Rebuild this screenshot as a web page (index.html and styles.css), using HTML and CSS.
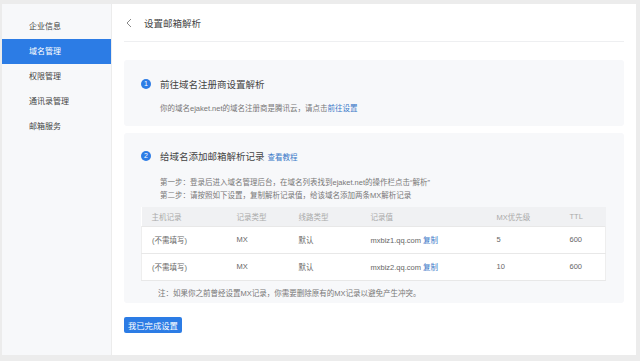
FILE: index.html
```html
<!DOCTYPE html>
<html lang="zh-CN">
<head>
    <meta charset="UTF-8" />
    <meta name="viewport" content="width=device-width, initial-scale=1" />
    <title>设置邮箱解析</title>
    <link rel="stylesheet" href="styles.css">
</head>
<body>
<div class="app">
    <ul class="sidebar">
        <li>企业信息</li>
        <li class="active">域名管理</li>
        <li>权限管理</li>
        <li>通讯录管理</li>
        <li>邮箱服务</li>
    </ul>

    <div class="main">
        <div class="header">
            <svg class="back" width="6" height="10" viewBox="0 0 6 10"><path d="M5 1 L1 5 L5 9" fill="none" stroke="#888" stroke-width="1"/></svg>
            <span class="header-title">设置邮箱解析</span>
        </div>

        <div class="card card-1">
            <div class="card-title"><span class="num">1</span>前往域名注册商设置解析</div>
            <p class="desc">你的域名ejaket.net的域名注册商是腾讯云，请点击<a href="#">前往设置</a></p>
        </div>

        <div class="card card-2">
            <div class="card-title"><span class="num">2</span>给域名添加邮箱解析记录 <a href="#" class="small-link">查看教程</a></div>
            <p class="step">第一步：登录后进入域名管理后台，在域名列表找到ejaket.net的操作栏点击“解析”</p>
            <p class="step">第二步：请按照如下设置，复制解析记录值，给该域名添加两条MX解析记录</p>

            <table class="records">
                <colgroup>
                    <col style="width: 85px">
                    <col style="width: 62px">
                    <col style="width: 72px">
                    <col style="width: 126px">
                    <col style="width: 73px">
                    <col>
                </colgroup>
                <thead>
                    <tr><th>主机记录</th><th>记录类型</th><th>线路类型</th><th>记录值</th><th>MX优先级</th><th>TTL</th></tr>
                </thead>
                <tbody>
                    <tr><td>(不需填写)</td><td>MX</td><td>默认</td><td>mxbiz1.qq.com <a href="#">复制</a></td><td>5</td><td>600</td></tr>
                    <tr><td>(不需填写)</td><td>MX</td><td>默认</td><td>mxbiz2.qq.com <a href="#">复制</a></td><td>10</td><td>600</td></tr>
                </tbody>
            </table>

            <p class="note">注：如果你之前曾经设置MX记录，你需要删除原有的MX记录以避免产生冲突。</p>
        </div>

        <button class="done">我已完成设置</button>
    </div>
</div>
</body>
</html>
```

FILE: styles.css
```css
* {
    box-sizing: border-box;
}

body {
    margin: 0;
    padding: 4px 4px 6px 2px;
    background-color: #ececec;
    font-family: "Liberation Sans", "Noto Sans CJK SC", sans-serif;
    color: #444;
}

a {
    color: #3a78c8;
    text-decoration: none;
}

.app {
    display: flex;
    height: 351px;
}

.sidebar {
    width: 109px;
    margin: 0;
    padding: 10px 0 0;
    list-style: none;
    background-color: #f7f8fa;
}

.sidebar li {
    height: 25px;
    line-height: 25px;
    padding-left: 27px;
    font-size: 8px;
    color: #444;
}

.sidebar li.active {
    background-color: #2c7ce5;
    color: #fff;
}

.main {
    flex: 1;
    background-color: #fff;
    margin-left: 1px;
    padding: 0 12px;
}

.header {
    height: 38px;
    display: flex;
    align-items: center;
    padding-left: 2px;
    border-bottom: 1px solid #eeeff1;
}

.back {
    margin-right: 12px;
}

.header-title {
    font-size: 9.5px;
    color: #444;
}

.card {
    background-color: #f7f8fa;
    border-radius: 3px;
    padding: 0 13px 0 17px;
}

.card-1 {
    margin-top: 18px;
    height: 66px;
    padding-top: 18px;
}

.card-2 {
    margin-top: 7px;
    height: 170px;
    padding-top: 17px;
}

.card-title {
    display: flex;
    align-items: center;
    font-size: 9.5px;
    height: 12px;
    color: #444;
}

.num {
    width: 10px;
    height: 10px;
    border-radius: 50%;
    background-color: #2c7ce5;
    color: #fff;
    font-size: 7px;
    line-height: 10px;
    text-align: center;
    margin-right: 9px;
}

.small-link {
    font-size: 7.5px;
    margin-left: 3px;
}

.desc {
    margin: 12px 0 0 19px;
    font-size: 7.5px;
    color: #777;
}

.step {
    margin: 0 0 0 19px;
    font-size: 7.5px;
    line-height: 13px;
    color: #777;
}

.card-2 .step:first-of-type {
    margin-top: 14px;
}

.records {
    width: 465px;
    margin-top: 5px;
    border-collapse: collapse;
    table-layout: fixed;
    background-color: #fff;
    font-size: 7.5px;
}

.records th {
    height: 19px;
    background-color: #f0f1f3;
    color: #aaa;
    font-weight: normal;
    text-align: left;
    padding: 0 0 0 10px;
}

.records td {
    height: 27px;
    padding: 0 0 0 10px;
    color: #666;
    border-top: 1px solid #e8e8e8;
    border-bottom: 1px solid #e8e8e8;
}

.records tr td:first-child {
    border-left: 1px solid #eee;
}

.records tr td:last-child {
    border-right: 1px solid #eee;
}

.note {
    margin: 6px 0 0 17px;
    font-size: 7.5px;
    color: #777;
}

.done {
    margin-top: 14px;
    height: 16px;
    padding: 0 4px;
    border: none;
    border-radius: 2px;
    background-color: #2c7ce5;
    color: #fff;
    font-family: inherit;
    font-size: 8.3px;
}
```
